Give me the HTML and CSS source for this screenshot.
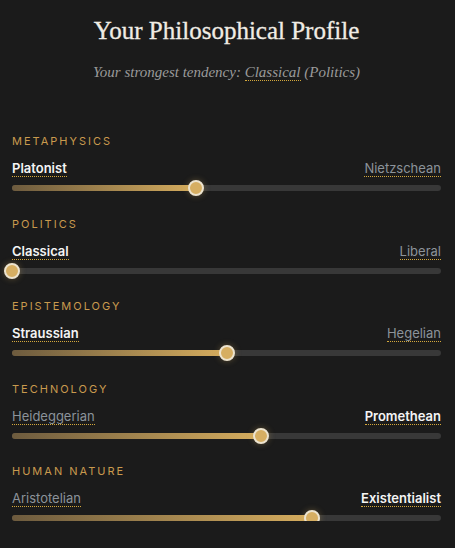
FILE: index.html
```html
<!DOCTYPE html>
<html>
<head>
<meta charset="utf-8">
<link rel="stylesheet" href="styles.css">
</head>
<body>
<div class="profile">
  <h1 class="title">Your Philosophical Profile</h1>
  <p class="subtitle">Your strongest tendency: <span class="term">Classical</span> (Politics)</p>

  <section class="axis">
    <div class="axis-name">Metaphysics</div>
    <div class="poles">
      <span class="pole active">Platonist</span>
      <span class="pole">Nietzschean</span>
    </div>
    <div class="track">
      <div class="fill" style="width:43%"></div>
      <div class="thumb" style="left:43%"></div>
    </div>
  </section>

  <section class="axis">
    <div class="axis-name">Politics</div>
    <div class="poles">
      <span class="pole active">Classical</span>
      <span class="pole">Liberal</span>
    </div>
    <div class="track">
      <div class="fill" style="width:0%"></div>
      <div class="thumb" style="left:0%"></div>
    </div>
  </section>

  <section class="axis">
    <div class="axis-name">Epistemology</div>
    <div class="poles">
      <span class="pole active">Straussian</span>
      <span class="pole">Hegelian</span>
    </div>
    <div class="track">
      <div class="fill" style="width:50%"></div>
      <div class="thumb" style="left:50%"></div>
    </div>
  </section>

  <section class="axis">
    <div class="axis-name">Technology</div>
    <div class="poles">
      <span class="pole">Heideggerian</span>
      <span class="pole active">Promethean</span>
    </div>
    <div class="track">
      <div class="fill" style="width:58%"></div>
      <div class="thumb" style="left:58%"></div>
    </div>
  </section>

  <section class="axis">
    <div class="axis-name">Human Nature</div>
    <div class="poles">
      <span class="pole">Aristotelian</span>
      <span class="pole active">Existentialist</span>
    </div>
    <div class="track">
      <div class="fill" style="width:70%"></div>
      <div class="thumb" style="left:70%"></div>
    </div>
  </section>
</div>
</body>
</html>
```

FILE: styles.css
```css
html, body {
  margin: 0;
  padding: 0;
  background: #1b1b1b;
}
body {
  font-family: Inter, "Noto Sans", sans-serif;
  color: #e8e8e8;
}
.profile {
  padding: 14px 14px 0 12px;
}
.title {
  margin: 0;
  text-align: center;
  font-family: "Liberation Serif", serif;
  font-weight: normal;
  font-size: 25px;
  line-height: 34px;
  color: #f0ece4;
  -webkit-text-stroke: 0.3px #f0ece4;
}
.subtitle {
  margin: 14px 0 0;
  text-align: center;
  font-family: "Liberation Serif", serif;
  font-style: italic;
  font-size: 15px;
  line-height: 20px;
  color: #9a9a9a;
}
.term {
  border-bottom: 1px dotted #d4a83c;
}
.axis:first-of-type {
  margin-top: 52px;
}
.axis + .axis {
  margin-top: 25.5px;
}
.axis-name {
  font-size: 11px;
  line-height: 14px;
  letter-spacing: 2px;
  text-transform: uppercase;
  color: #c99a4e;
}
.poles {
  display: flex;
  justify-content: space-between;
  margin-top: 12px;
  font-size: 13px;
  line-height: 16px;
}
.pole {
  color: #8c939a;
  border-bottom: 1px dotted #d4a83c;
}
.pole.active {
  color: #f4f4f4;
  font-weight: 600;
}
.track {
  position: relative;
  margin-top: 8px;
  height: 6px;
  border-radius: 3px;
  background: #383838;
}
.fill {
  height: 100%;
  border-radius: 3px;
  background: linear-gradient(90deg, #6d5b3e, #d6ad5e);
}
.thumb {
  position: absolute;
  top: 50%;
  width: 12px;
  height: 12px;
  border: 2px solid #ece3cf;
  border-radius: 50%;
  background: #d6ae62;
  transform: translate(-50%, -50%);
  box-shadow: 0 0 6px rgba(214, 174, 98, 0.35);
}
```
